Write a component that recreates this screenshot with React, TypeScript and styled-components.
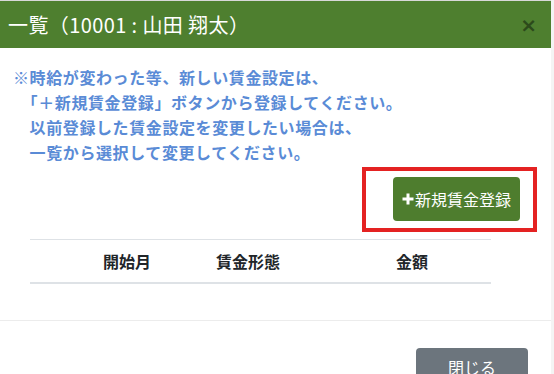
import React from "react";
import styled, { createGlobalStyle } from "styled-components";

const GlobalStyle = createGlobalStyle`
  html, body {
    margin: 0;
    padding: 0;
    background: #f4f4f4;
  }
  body {
    font-family: "Noto Sans CJK JP", "Noto Sans", sans-serif;
    color: #212529;
  }
`;

const Modal = styled.div`
  width: 551px;
  height: 374px;
  background: #fff;
  border-top: 1px solid #d8d8d8;
  box-sizing: border-box;
  overflow: hidden;
`;

const Header = styled.div`
  height: 47px;
  background: #4e7f2f;
  display: flex;
  align-items: center;
  justify-content: space-between;
  padding: 0 14px 0 8px;
`;

const Title = styled.h5`
  margin: 0;
  color: #fff;
  font-size: 20px;
  font-weight: 400;
  line-height: 1;
  letter-spacing: 0.4px;
`;

const CloseX = styled.button`
  border: 0;
  background: transparent;
  color: #2c4a1b;
  font-size: 20px;
  font-weight: 700;
  line-height: 1;
  padding: 0;
  font-family: "DejaVu Sans", sans-serif;
`;

const Body = styled.div`
  padding: 17px 13px 36px;
  border-bottom: 1px solid #ececec;
`;

const Notice = styled.p`
  margin: 0;
  color: #5a8bd6;
  font-size: 16px;
  font-weight: 700;
  line-height: 25px;
  letter-spacing: 0.6px;
  white-space: pre;
`;

const ButtonRow = styled.div`
  display: flex;
  justify-content: flex-end;
  margin: 12px 18px 0 0;
`;

const Highlight = styled.div`
  position: relative;
`;

const RedFrame = styled.span`
  position: absolute;
  top: -10px;
  left: -31px;
  right: -17px;
  bottom: -11px;
  border: 4px solid #e42222;
  pointer-events: none;
`;

const GreenButton = styled.button`
  height: 44px;
  width: 127px;
  border: 0;
  border-radius: 4px;
  background: #4e7d2e;
  color: #fff;
  font-family: inherit;
  font-size: 16px;
  display: flex;
  align-items: center;
  justify-content: center;
  gap: 1px;
  padding: 0;
`;

const Table = styled.div`
  margin: 18px 47px 0 17px;
  border-top: 1px solid #dee2e6;
  border-bottom: 2px solid #dee2e6;
  display: grid;
  grid-template-columns: 73px 113px 180px 1fr;
  height: 42px;
  align-items: center;
`;

const Th = styled.div`
  font-size: 16px;
  font-weight: 700;
  color: #212529;
`;

const Footer = styled.div`
  display: flex;
  justify-content: flex-end;
  padding: 27px 23px 0 0;
`;

const GrayButton = styled.button`
  width: 112px;
  height: 38px;
  border: 0;
  border-radius: 4px;
  background: #6c757d;
  color: #fff;
  font-family: inherit;
  font-size: 16px;
`;

const PlusIcon = () => (
  <svg width="12" height="12" viewBox="0 0 12 12">
    <path d="M6 0.5v11M0.5 6h11" stroke="#fff" strokeWidth="3" />
  </svg>
);

const notice =
  "※時給が変わった等、新しい賃金設定は、\n" +
  "　「＋新規賃金登録」ボタンから登録してください。\n" +
  "　以前登録した賃金設定を変更したい場合は、\n" +
  "　一覧から選択して変更してください。";

export default function App() {
  return (
    <>
      <GlobalStyle />
      <Modal>
        <Header>
          <Title>一覧（10001 : 山田 翔太）</Title>
          <CloseX>×</CloseX>
        </Header>
        <Body>
          <Notice>{notice}</Notice>
          <ButtonRow>
            <Highlight>
              <GreenButton>
                <PlusIcon />
                新規賃金登録
              </GreenButton>
              <RedFrame />
            </Highlight>
          </ButtonRow>
          <Table>
            <span />
            <Th>開始月</Th>
            <Th>賃金形態</Th>
            <Th>金額</Th>
          </Table>
        </Body>
        <Footer>
          <GrayButton>閉じる</GrayButton>
        </Footer>
      </Modal>
    </>
  );
}
